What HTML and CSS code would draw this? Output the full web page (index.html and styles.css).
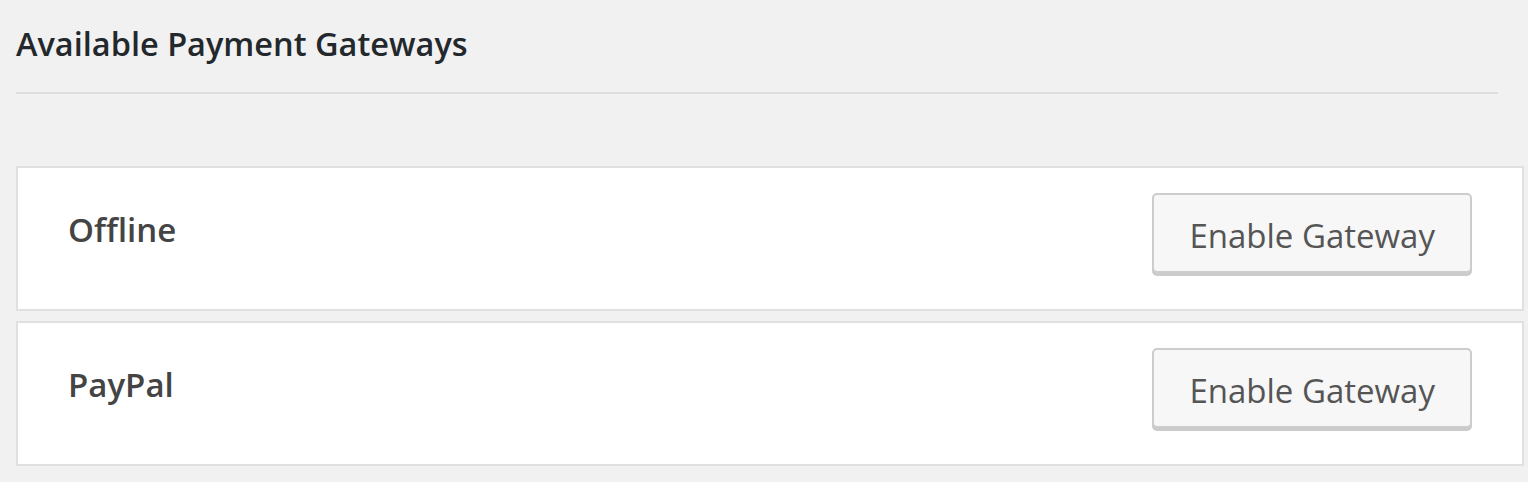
FILE: index.html
```html
<!DOCTYPE html>
<html>
<head>
  <title>Payment Gateways</title>
  <link rel="stylesheet" href="styles.css">
</head>
<body>
  <div class="wrap">
    <h2 class="page-title">Available Payment Gateways</h2>
    <hr class="title-rule">

    <div class="gateway-list">
      <div class="gateway">
        <h3 class="gateway-name">Offline</h3>
        <button class="button">Enable Gateway</button>
      </div>
      <div class="gateway">
        <h3 class="gateway-name">PayPal</h3>
        <button class="button">Enable Gateway</button>
      </div>
    </div>
  </div>
</body>
</html>
```

FILE: styles.css
```css
/* Page */
body {
  margin: 0;
  background-color: #f1f1f1;
  font-family: "Open Sans", "Noto Sans", sans-serif;
  color: #444;
}

.wrap {
  padding: 0 4px 0 16px;
}

/* Heading */
.page-title {
  margin: 0;
  padding: 22px 0 0;
  font-size: 32.5px;
  font-weight: 600;
  line-height: 44px;
  color: #23282d;
}

.title-rule {
  margin: 26px 26px 0 0;
  border: none;
  border-top: 2px solid #dedede;
}

/* Gateway cards */
.gateway-list {
  display: flex;
  flex-direction: column;
  gap: 10px;
  margin-top: 72px;
}

.gateway {
  display: flex;
  justify-content: space-between;
  align-items: flex-start;
  padding: 25px 50px 36px;
  background-color: #fff;
  border: 2px solid #e0e0e0;
}

.gateway-name {
  margin: 0;
  padding-top: 15px;
  font-size: 33px;
  font-weight: 600;
  line-height: 44px;
  color: #444;
}

/* Button */
.button {
  height: 80px;
  padding: 5px 35px 0;
  font-family: "Open Sans", "Noto Sans", sans-serif;
  font-size: 33px;
  color: #555;
  background-color: #f7f7f7;
  border: 2px solid #ccc;
  border-radius: 5px;
  box-shadow: 0 3px 0 #ccc;
  cursor: pointer;
}

.button:hover {
  background-color: #fafafa;
}
```
